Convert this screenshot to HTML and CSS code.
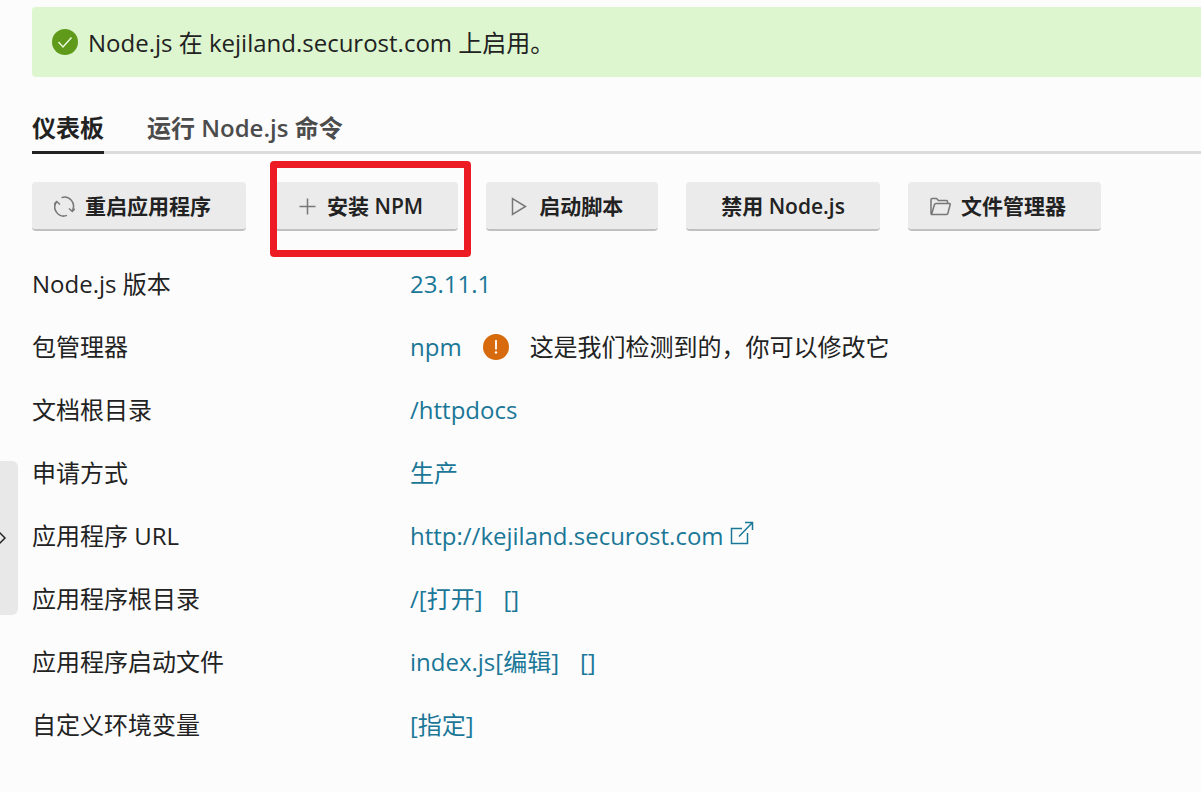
FILE: index.html
```html
<!DOCTYPE html>
<html lang="zh-CN">
<head>
    <meta charset="utf-8">
    <meta name="viewport" content="width=device-width, initial-scale=1">
    <title>Node.js</title>
    <link rel="stylesheet" href="styles.css">
</head>
<body>
    <button type="button" class="side-toggle" aria-label="展开">
        <svg width="10" height="14" viewBox="0 0 10 14"><path d="M-1 1L5 7L-1 13"/></svg>
    </button>

    <main class="page">
        <div class="alert">
            <svg class="alert-icon" width="26" height="26" viewBox="0 0 26 26">
                <circle cx="13" cy="13" r="13" fill="#5f9a1a"/>
                <path d="M6.500 13L11 18L19.500 8.500" fill="none" stroke="#e8fadd" stroke-width="1.500"/>
            </svg>
            <span>Node.js 在 kejiland.securost.com 上启用。</span>
        </div>

        <nav class="tabs">
            <a href="#" class="tab active">仪表板</a>
            <a href="#" class="tab">运行 Node.js 命令</a>
        </nav>

        <div class="toolbar">
            <button type="button" class="btn btn-icon">
                <svg class="icon" viewBox="0 0 21 21">
                    <path d="M7.500 1.600A9 9 0 0 1 18.300 14.500M13 19.400A9 9 0 0 1 2.700 5.500"/>
                    <path d="M15 12.500L18.300 15.500L21 12.800M0 8.200L2.700 5.500L6 8.500"/>
                </svg>
                <span>重启应用程序</span>
            </button>
            <div class="marked">
                <button type="button" class="btn btn-icon">
                    <svg class="icon" viewBox="0 0 21 21"><path d="M11.500 2.500V18.500M3.500 10.500H19.500"/></svg>
                    <span>安装 NPM</span>
                </button>
            </div>
            <button type="button" class="btn btn-icon">
                <svg class="icon" viewBox="0 0 21 21"><path d="M4.500 2.500V18.500L17.500 10.500Z"/></svg>
                <span>启动脚本</span>
            </button>
            <button type="button" class="btn">禁用 Node.js</button>
            <button type="button" class="btn btn-icon">
                <svg class="icon" viewBox="0 0 21 21">
                    <path d="M1 18V3.500Q1 2.500 2 2.500H6.500L8.500 4.500H16.500Q17.500 4.500 17.500 5.500V7.500M1.500 18.500L4.500 8.500Q4.800 7.500 6 7.500H19.500Q20.500 7.500 20.200 8.500L17.800 17.500Q17.500 18.500 16.500 18.500Z"/>
                </svg>
                <span>文件管理器</span>
            </button>
        </div>

        <dl class="props">
            <dt>Node.js 版本</dt>
            <dd><a href="#">23.11.1</a></dd>

            <dt>包管理器</dt>
            <dd class="with-hint">
                <a href="#">npm</a>
                <svg width="26" height="26" viewBox="0 0 26 26">
                    <circle cx="13" cy="13" r="13" fill="#d66a0c"/>
                    <path d="M13 6V15.500" stroke="#fff" stroke-width="1.800"/>
                    <circle cx="13" cy="18.500" r="1.200" fill="#fff"/>
                </svg>
                <span>这是我们检测到的，你可以修改它</span>
            </dd>

            <dt>文档根目录</dt>
            <dd><a href="#">/httpdocs</a></dd>

            <dt>申请方式</dt>
            <dd><a href="#">生产</a></dd>

            <dt>应用程序 URL</dt>
            <dd>
                <a href="#" class="external">http://kejiland.securost.com
                    <svg width="24" height="24" viewBox="0 0 24 24"><path d="M12 7.500H1.500V22.500H17.500V12M9 15.500L22.500 1.500M15 1.500H22.500V9"/></svg>
                </a>
            </dd>

            <dt>应用程序根目录</dt>
            <dd class="links"><a href="#">/[打开]</a><a href="#">[]</a></dd>

            <dt>应用程序启动文件</dt>
            <dd class="links"><a href="#">index.js[编辑]</a><a href="#">[]</a></dd>

            <dt>自定义环境变量</dt>
            <dd><a href="#">[指定]</a></dd>
        </dl>
    </main>
</body>
</html>
```
FILE: styles.css
```css
* {
    box-sizing: border-box;
}

body {
    margin: 0;
    background: #fcfcfc;
    color: #222;
    font-family: "Open Sans", "Noto Sans CJK SC", sans-serif;
    font-size: 24px;
    line-height: 35px;
}

a {
    color: #1a7797;
    text-decoration: none;
}

.page {
    padding: 7px 0 48px 32px;
}

.side-toggle {
    position: absolute;
    top: 461px;
    left: 0;
    width: 18px;
    height: 154px;
    padding: 0;
    border: none;
    border-radius: 0 6px 6px 0;
    background: #e8e8e8;
    display: flex;
    align-items: center;
    cursor: pointer;
}

.side-toggle svg {
    fill: none;
    stroke: #222;
    stroke-width: 1.5;
}

.alert {
    display: flex;
    align-items: center;
    gap: 10px;
    min-height: 70px;
    padding: 0 20px;
    background: #ddf6cf;
    border-radius: 4px 0 0 4px;
}

.alert-icon {
    flex: none;
}

.tabs {
    display: flex;
    gap: 43px;
    margin-top: 28px;
    border-bottom: 3px solid #dcdcdc;
}

.tab {
    padding: 5px 0 6px;
    margin-bottom: -3px;
    border-bottom: 3px solid transparent;
    color: #4c4c4c;
    font-weight: 600;
}

.tab.active {
    color: #222;
    border-bottom-color: #222;
}

.toolbar {
    display: flex;
    gap: 28px;
    margin-top: 28px;
}

.btn {
    display: flex;
    align-items: center;
    gap: 10px;
    height: 49px;
    padding: 0 35px 2px;
    border: none;
    border-bottom: 2px solid #c0c0c0;
    border-radius: 4px;
    background: #ebebeb;
    color: #222;
    font-family: inherit;
    font-size: 21px;
    font-weight: 600;
    white-space: nowrap;
    cursor: pointer;
}

.btn-icon {
    padding-left: 22px;
}

.icon {
    width: 21px;
    height: 21px;
    margin-top: 4px;
    fill: none;
    stroke: #777;
    stroke-width: 1.5;
}

.marked {
    position: relative;
}

.marked::after {
    content: "";
    position: absolute;
    top: -21px;
    right: -13px;
    bottom: -26px;
    left: -4px;
    border: 7px solid #ed1c24;
    border-radius: 4px;
    pointer-events: none;
}

.props {
    display: grid;
    grid-template-columns: 350px 1fr;
    gap: 28px;
    margin: 35px 0 0;
}

.props dd {
    margin: 0;
}

.with-hint {
    display: flex;
    align-items: center;
    gap: 21px;
}

.links {
    display: flex;
    gap: 21px;
}

.external svg {
    fill: none;
    stroke: #1a7797;
    stroke-width: 1.5;
}
```
